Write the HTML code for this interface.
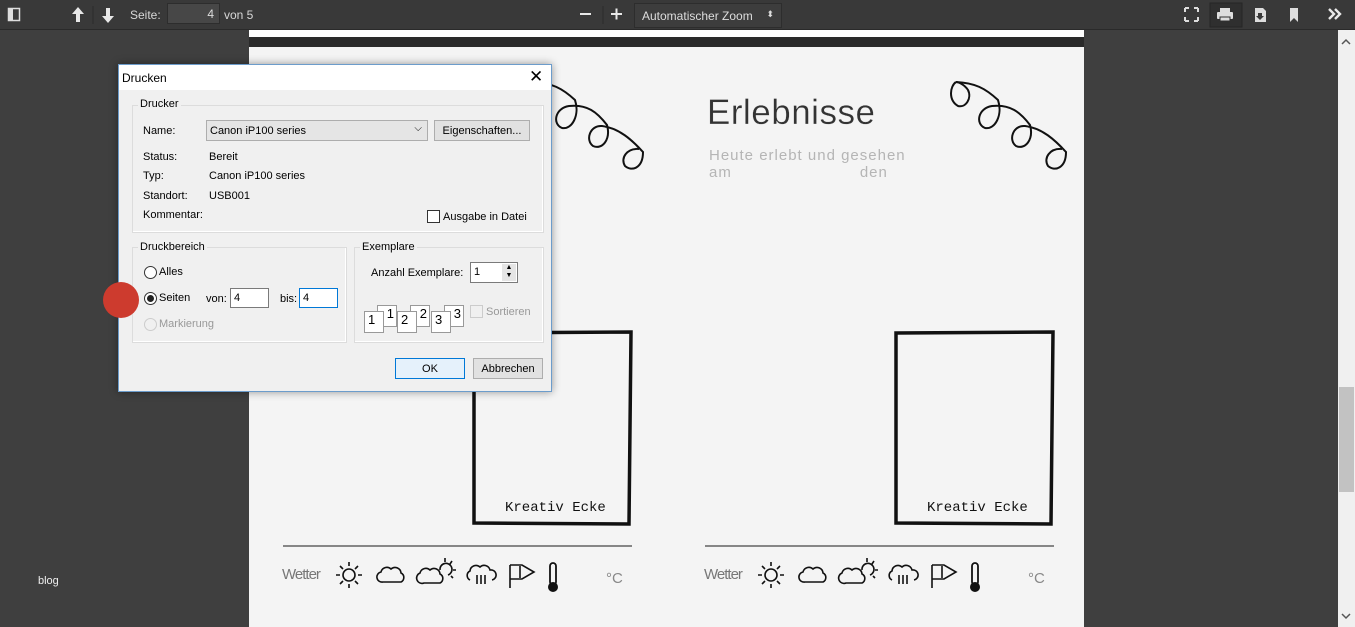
<!DOCTYPE html>
<html><head><meta charset="utf-8"><style>
*{box-sizing:border-box;margin:0;padding:0}
body{width:1355px;height:627px;overflow:hidden;background:#3f3f3f;font-family:"Liberation Sans",sans-serif;position:relative}
.abs{position:absolute}
.tb{left:0;top:0;width:1355px;height:30px;background:#393939;border-bottom:1px solid #2a2a2a}
.tbt{color:#d8d8d8;font-size:12px;top:8px}
.dlg{left:118px;top:64px;width:434px;height:328px;background:#f0f0f0;border:1px solid #6c9ccb;box-shadow:0 0 8px rgba(0,0,0,.4);font-size:11px;color:#000}
.dlg .abs{font-size:11px}
.grp{border:1px solid #dcdcdc;box-shadow:inset -1px -1px 0 #fff}
.lab{background:#f0f0f0;padding:0 2px}
.btn{background:#e1e1e1;border:1px solid #adadad;text-align:center}
.inp{background:#fff;border:1px solid #7a7a7a;padding-left:3px}
.pg{position:absolute;width:20px;height:22px;background:#fff;border:1px solid #999;font-size:13px;text-align:right;padding-right:2px}
</style></head><body>
<div class="abs tb"></div>
<svg class="abs" style="left:0;top:0" width="1355" height="30">
<rect x="8.5" y="8.5" width="11" height="12" fill="none" stroke="#ddd" stroke-width="1.5"/><rect x="9" y="9" width="4" height="11" fill="#ddd"/>
<path d="M78 7 L72 14 L76 14 L76 22 L80 22 L80 14 L84 14Z" fill="#e8e8e8"/>
<line x1="93" y1="6" x2="93" y2="24" stroke="#2a2a2a"/>
<path d="M108 23 L102 16 L106 16 L106 8 L110 8 L110 16 L114 16Z" fill="#e8e8e8"/>
<rect x="580" y="13" width="11" height="2" fill="#e8e8e8"/>
<line x1="603" y1="6" x2="603" y2="24" stroke="#2a2a2a"/>
<rect x="611" y="13" width="11" height="2" fill="#e8e8e8"/><rect x="615.5" y="8.5" width="2" height="11" fill="#e8e8e8"/>
<path d="M1185 8h4M1185 8v4M1198 8h-4M1198 8v4M1185 21h4M1185 21v-4M1198 21h-4M1198 21v-4" stroke="#ddd" stroke-width="2"/>
<rect x="1210" y="3" width="32" height="24" fill="#2f2f2f" stroke="#252525"/>
<rect x="1220" y="8" width="10" height="4" fill="#ddd"/><rect x="1217" y="12" width="16" height="7" rx="1" fill="#ddd"/><rect x="1220" y="17" width="10" height="4" fill="#ddd" stroke="#2f2f2f"/>
<path d="M1255 8h8l3 3v11h-11z" fill="#ddd"/><path d="M1258 13h4v3h2l-4 4-4-4h2z" fill="#393939"/>
<path d="M1290 8h8v14l-4-4-4 4z" fill="#ddd"/>
<path d="M1329 9l5 5-5 5M1335 9l5 5-5 5" stroke="#e8e8e8" stroke-width="2.4" fill="none"/>
</svg>
<div class="abs tbt" style="left:130px">Seite:</div>
<div class="abs" style="left:167px;top:3px;width:53px;height:21px;background:#474747;border:1px solid #2d2d2d;color:#ddd;font-size:12px;text-align:right;padding:3px 5px">4</div>
<div class="abs tbt" style="left:224px">von 5</div>
<div class="abs" style="left:634px;top:3px;width:148px;height:25px;background:#3d3d3d;border:1px solid #2d2d2d;color:#ddd;font-size:12px;padding:5px 7px">Automatischer Zoom <span style="float:right;font-size:9px">⬍</span></div>

<div class="abs" style="left:249px;top:30px;width:835px;height:7px;background:#fff"></div>
<div class="abs" style="left:249px;top:37px;width:835px;height:10px;background:#2a2a2a"></div>
<div class="abs" style="left:249px;top:47px;width:835px;height:580px;background:#f4f4f4"></div>
<div class="abs" style="left:38px;top:575px;color:#eee;font-size:11px">blog</div>
<div class="abs" style="left:707px;top:93px;font-size:35px;color:#333;letter-spacing:0.5px;-webkit-text-stroke:0.3px #f4f4f4">Erlebnisse</div>
<div class="abs" style="left:709px;top:147px;font-size:15px;color:#b5b5b5;letter-spacing:1px;line-height:17px">Heute erlebt und gesehen<br>am<span style="margin-left:128px">den</span></div>
<svg class="abs" style="left:0;top:0" width="1355" height="627">
<g id="sp" fill="none" stroke="#111" stroke-width="2">
<path d="M956 82 C975 83 985 88 998 100 C1003 115 995 130 985 128 C975 124 978 108 992 106 C1010 104 1020 112 1030 125 C1034 140 1025 150 1016 146 C1008 140 1013 125 1025 126 C1042 128 1055 140 1066 152 C1066 168 1055 172 1048 166 C1043 158 1050 148 1062 149"/>
<path d="M956 82 C950 86 948 100 958 106 C966 108 972 98 968 90 C964 84 958 82 956 82"/>
</g>
<use href="#sp" x="-423"/>
<g id="fr">
<path d="M474 333 L631 332 L629 524 L474 523Z" fill="none" stroke="#111" stroke-width="3.5"/>
<text x="505" y="511" font-family="Liberation Mono,monospace" font-size="14" fill="#111">Kreativ Ecke</text>
<line x1="283" y1="546" x2="632" y2="546" stroke="#444" stroke-width="1.3"/>
<text x="282" y="579" font-family="Liberation Sans,sans-serif" font-size="15" fill="#777" letter-spacing="-1">Wetter</text>
<g fill="none" stroke="#111" stroke-width="1.6">
<circle cx="349" cy="575" r="6"/><path d="M349 562v4M349 584v4M336 575h4M358 575h4M340 566l3 3M355 581l3 3M358 566l-3 3M343 581l-3 3"/>
<path d="M383 582h18a5 5 0 0 0 0-9a6 6 0 0 0-10-4a6 6 0 0 0-10 3a5 5 0 0 0 2 10z"/>
<path d="M424 583h16a5 5 0 0 0 0-9a6 6 0 0 0-10-4a6 6 0 0 0-10 3a5 5 0 0 0 4 10z"/><path d="M440 570a6 6 0 1 1 8 5M445 558v4M456 570h-3M452 561l-2 3M453 578l-2-2"/>
<path d="M470 580a5 5 0 0 1 0-9a6 6 0 0 1 10-4a6 6 0 0 1 10 3a5 5 0 0 1 2 10M477 575v9M481 575v9M485 575v9"/>
<path d="M510 588V565M510 565h12l12 7-12 7h-12"/><path d="M520 566v12"/>
</g>
<rect x="550" y="563" width="6" height="22" rx="3" fill="none" stroke="#111" stroke-width="1.8"/><circle cx="553" cy="587" r="5" fill="#111"/>
<text x="606" y="583" font-family="Liberation Sans,sans-serif" font-size="15" fill="#888">°C</text>
</g>
<use href="#fr" x="422"/>
<rect x="1338" y="30" width="17" height="597" fill="#f0f0f0"/>
<rect x="1339" y="387" width="15" height="105" fill="#c2c2c2"/>
<path d="M1342 44l4-4 4 4M1342 614l4 4 4-4" stroke="#555" stroke-width="1.5" fill="none"/>
</svg>

<div class="abs dlg">
<div class="abs" style="left:0;top:0;width:432px;height:25px;background:#fff"></div>
<div class="abs" style="left:3px;top:6px;font-size:12px">Drucken</div>
<div class="abs" style="left:410px;top:2px;font-size:17px;font-weight:300">✕</div>
<div class="abs grp" style="left:13px;top:40px;width:412px;height:128px"></div>
<div class="abs lab" style="left:19px;top:33px">Drucker</div>
<div class="abs" style="left:24px;top:60px">Name:</div>
<div class="abs" style="left:87px;top:55px;width:222px;height:21px;background:#e5e5e5;border:1px solid #adadad;padding:4px 3px">Canon iP100 series<span style="position:absolute;right:5px;top:2px;font-size:10px">⌵</span></div>
<div class="abs btn" style="left:315px;top:55px;width:96px;height:21px;padding-top:4px">Eigenschaften...</div>
<div class="abs" style="left:24px;top:86px">Status:</div><div class="abs" style="left:90px;top:86px">Bereit</div>
<div class="abs" style="left:24px;top:105px">Typ:</div><div class="abs" style="left:90px;top:105px">Canon iP100 series</div>
<div class="abs" style="left:24px;top:125px">Standort:</div><div class="abs" style="left:90px;top:125px">USB001</div>
<div class="abs" style="left:24px;top:144px">Kommentar:</div>
<div class="abs" style="left:308px;top:145px;width:13px;height:13px;background:#fff;border:1px solid #333"></div>
<div class="abs" style="left:324px;top:146px">Ausgabe in Datei</div>
<div class="abs grp" style="left:13px;top:182px;width:215px;height:96px"></div>
<div class="abs lab" style="left:19px;top:176px">Druckbereich</div>
<div class="abs" style="left:25px;top:201px;width:13px;height:13px;border:1px solid #333;border-radius:50%;background:#fff"></div><div class="abs" style="left:40px;top:201px">Alles</div>
<div class="abs" style="left:25px;top:227px;width:13px;height:13px;border:1px solid #333;border-radius:50%;background:#fff"><div style="margin:2px;width:7px;height:7px;border-radius:50%;background:#222"></div></div><div class="abs" style="left:40px;top:227px">Seiten</div>
<div class="abs" style="left:87px;top:228px">von:</div><div class="abs inp" style="left:111px;top:223px;width:39px;height:20px;padding-top:3px">4</div>
<div class="abs" style="left:161px;top:228px">bis:</div><div class="abs inp" style="left:180px;top:223px;width:39px;height:20px;padding-top:3px;border-color:#0078d7">4</div>
<div class="abs" style="left:25px;top:253px;width:13px;height:13px;border:1px solid #ccc;border-radius:50%"></div><div class="abs" style="left:40px;top:253px;color:#999">Markierung</div>
<div class="abs grp" style="left:235px;top:182px;width:190px;height:96px"></div>
<div class="abs lab" style="left:241px;top:176px">Exemplare</div>
<div class="abs" style="left:252px;top:202px">Anzahl Exemplare:</div>
<div class="abs inp" style="left:351px;top:197px;width:48px;height:21px;padding-top:3px">1</div>
<div class="abs" style="left:383px;top:199px;width:14px;height:17px;background:#e5e5e5;font-size:7px;line-height:8px;text-align:center">▲<br>▼</div>
<div class="pg" style="left:258px;top:240px">1</div><div class="pg" style="left:245px;top:246px;text-align:left;padding-left:3px">1</div>
<div class="pg" style="left:291px;top:240px">2</div><div class="pg" style="left:278px;top:246px;text-align:left;padding-left:3px">2</div>
<div class="pg" style="left:325px;top:240px">3</div><div class="pg" style="left:312px;top:246px;text-align:left;padding-left:3px">3</div>
<div class="abs" style="left:351px;top:240px;width:13px;height:13px;border:1px solid #ccc"></div><div class="abs" style="left:367px;top:241px;color:#999">Sortieren</div>
<div class="abs btn" style="left:276px;top:293px;width:70px;height:21px;padding-top:4px;background:#e5f1fb;border-color:#0078d7">OK</div>
<div class="abs btn" style="left:354px;top:293px;width:70px;height:21px;padding-top:4px">Abbrechen</div>
</div>
<div class="abs" style="left:103px;top:282px;width:36px;height:36px;border-radius:50%;background:#cd3b2e"></div>
</body></html>
